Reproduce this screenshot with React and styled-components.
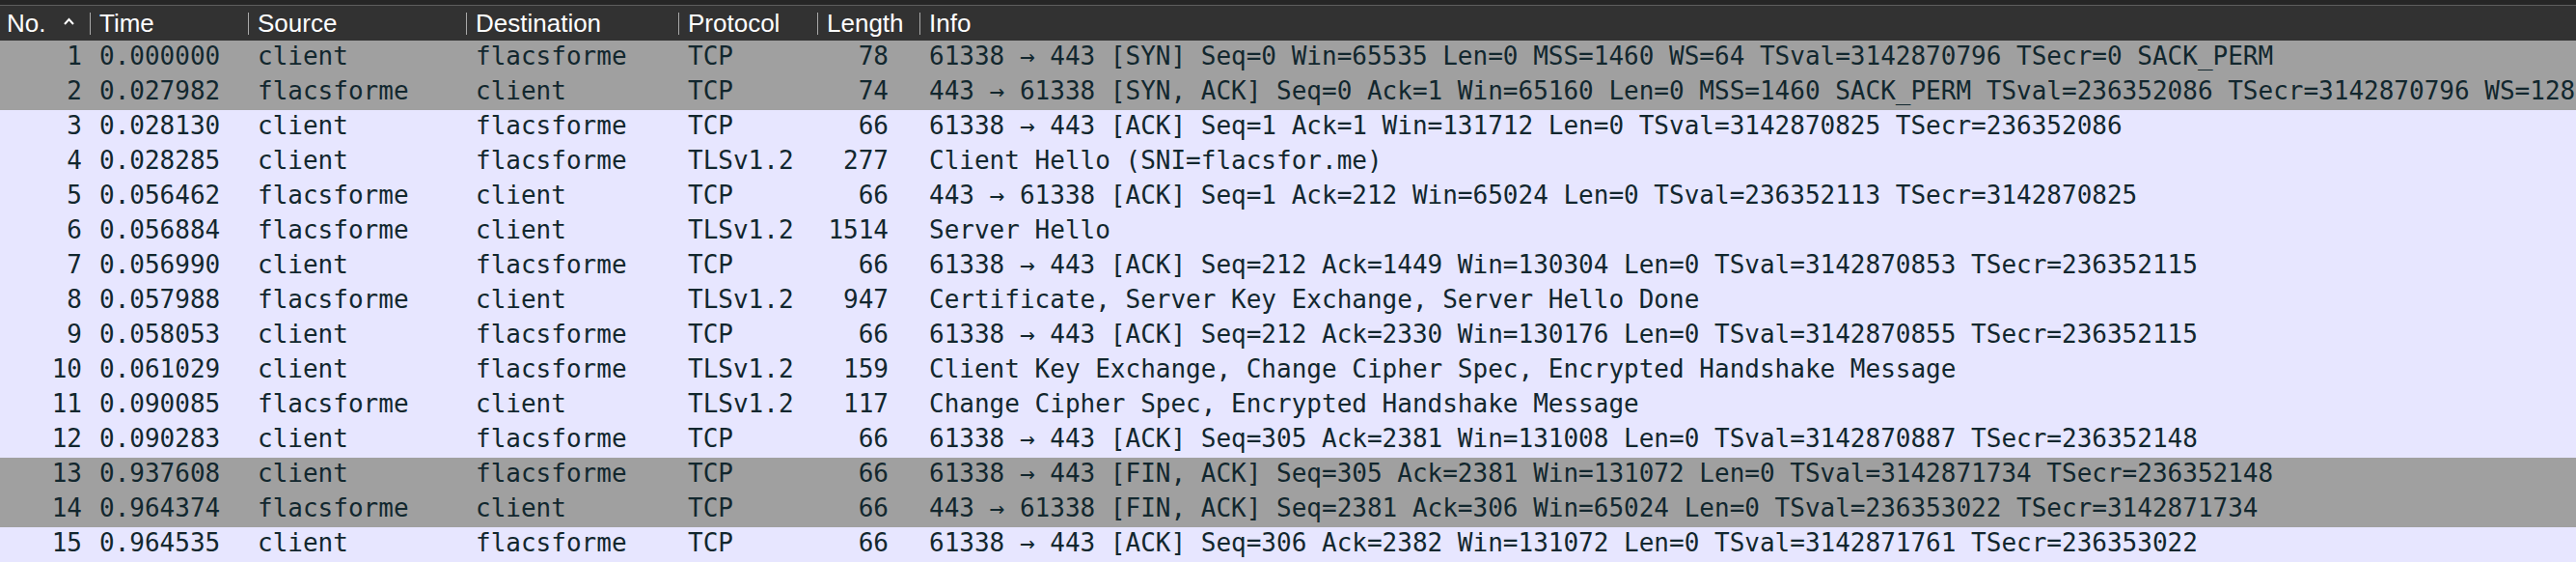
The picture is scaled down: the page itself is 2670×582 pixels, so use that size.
import React from "react";
import styled, { createGlobalStyle } from "styled-components";

const GlobalStyle = createGlobalStyle`
  html, body {
    margin: 0;
    padding: 0;
    background: #e7e6ff;
  }
`;

const COLS = "93px 164px 226px 220px 144px 106px 1fr";

const packets = [
  ["1", "0.000000", "client", "flacsforme", "TCP", "78", "61338 → 443 [SYN] Seq=0 Win=65535 Len=0 MSS=1460 WS=64 TSval=3142870796 TSecr=0 SACK_PERM", true],
  ["2", "0.027982", "flacsforme", "client", "TCP", "74", "443 → 61338 [SYN, ACK] Seq=0 Ack=1 Win=65160 Len=0 MSS=1460 SACK_PERM TSval=236352086 TSecr=3142870796 WS=128", true],
  ["3", "0.028130", "client", "flacsforme", "TCP", "66", "61338 → 443 [ACK] Seq=1 Ack=1 Win=131712 Len=0 TSval=3142870825 TSecr=236352086"],
  ["4", "0.028285", "client", "flacsforme", "TLSv1.2", "277", "Client Hello (SNI=flacsfor.me)"],
  ["5", "0.056462", "flacsforme", "client", "TCP", "66", "443 → 61338 [ACK] Seq=1 Ack=212 Win=65024 Len=0 TSval=236352113 TSecr=3142870825"],
  ["6", "0.056884", "flacsforme", "client", "TLSv1.2", "1514", "Server Hello"],
  ["7", "0.056990", "client", "flacsforme", "TCP", "66", "61338 → 443 [ACK] Seq=212 Ack=1449 Win=130304 Len=0 TSval=3142870853 TSecr=236352115"],
  ["8", "0.057988", "flacsforme", "client", "TLSv1.2", "947", "Certificate, Server Key Exchange, Server Hello Done"],
  ["9", "0.058053", "client", "flacsforme", "TCP", "66", "61338 → 443 [ACK] Seq=212 Ack=2330 Win=130176 Len=0 TSval=3142870855 TSecr=236352115"],
  ["10", "0.061029", "client", "flacsforme", "TLSv1.2", "159", "Client Key Exchange, Change Cipher Spec, Encrypted Handshake Message"],
  ["11", "0.090085", "flacsforme", "client", "TLSv1.2", "117", "Change Cipher Spec, Encrypted Handshake Message"],
  ["12", "0.090283", "client", "flacsforme", "TCP", "66", "61338 → 443 [ACK] Seq=305 Ack=2381 Win=131008 Len=0 TSval=3142870887 TSecr=236352148"],
  ["13", "0.937608", "client", "flacsforme", "TCP", "66", "61338 → 443 [FIN, ACK] Seq=305 Ack=2381 Win=131072 Len=0 TSval=3142871734 TSecr=236352148", true],
  ["14", "0.964374", "flacsforme", "client", "TCP", "66", "443 → 61338 [FIN, ACK] Seq=2381 Ack=306 Win=65024 Len=0 TSval=236353022 TSecr=3142871734", true],
  ["15", "0.964535", "client", "flacsforme", "TCP", "66", "61338 → 443 [ACK] Seq=306 Ack=2382 Win=131072 Len=0 TSval=3142871761 TSecr=236353022"],
];

export default function App() {
  return (
    <>
      <GlobalStyle />
      <Wrapper>
        <TopStrip />
        <HeaderRow>
          <HeaderCell>
            <span>No.</span>
            <SortArrow width="11" height="8" viewBox="0 0 11 8">
              <polyline points="1,7 5.5,2 10,7" fill="none" stroke="#ffffff" strokeWidth="2" />
            </SortArrow>
          </HeaderCell>
          {["Time", "Source", "Destination", "Protocol", "Length", "Info"].map((h) => (
            <HeaderCell key={h}>
              <Divider />
              <span>{h}</span>
            </HeaderCell>
          ))}
        </HeaderRow>
        {packets.map(([no, time, src, dst, proto, len, info, flag]) => (
          <PacketRow key={no} $flag={flag}>
            <Cell $right>{no}</Cell>
            <Cell>{time}</Cell>
            <Cell>{src}</Cell>
            <Cell>{dst}</Cell>
            <Cell>{proto}</Cell>
            <Cell $right $pr={32}>{len}</Cell>
            <Cell>{info}</Cell>
          </PacketRow>
        ))}
      </Wrapper>
    </>
  );
}

const Wrapper = styled.div`
  width: 100%;
  height: 582px;
  overflow: hidden;
  display: flex;
  flex-direction: column;
`;

const TopStrip = styled.div`
  height: 5px;
  background-color: #262626;
  border-bottom: 1px solid #5e5e5e;
`;

const HeaderRow = styled.div`
  display: grid;
  grid-template-columns: ${COLS};
  height: 36px;
  background-color: #323232;
  color: #ffffff;
  font-family: "Liberation Sans", Arial, sans-serif;
  font-size: 26px;
  line-height: 36px;
`;

const HeaderCell = styled.div`
  display: flex;
  align-items: center;
  gap: 9px;
  padding-left: 0;
  white-space: nowrap;
  overflow: hidden;

  &:first-child {
    padding-left: 7px;
    gap: 0;
    justify-content: space-between;
    padding-right: 16px;
  }
`;

const Divider = styled.div`
  width: 1px;
  height: 23px;
  background-color: #a8a8a8;
  flex-shrink: 0;
`;

const SortArrow = styled.svg`
  margin-top: -4px;
`;

const PacketRow = styled.div`
  display: grid;
  grid-template-columns: ${COLS};
  height: 36px;
  background-color: ${(p) => (p.$flag ? "#a0a0a0" : "#e7e6ff")};
  color: #12272e;
  font-family: "DejaVu Sans Mono", "Liberation Mono", monospace;
  font-size: 26px;
  line-height: 32px;
  padding-bottom: 4px;
  box-sizing: border-box;
`;

const Cell = styled.div`
  padding-left: 10px;
  padding-right: ${(p) => (p.$right ? `${p.$pr ?? 8}px` : "0")};
  text-align: ${(p) => (p.$right ? "right" : "left")};
  white-space: nowrap;
  overflow: hidden;
`;
